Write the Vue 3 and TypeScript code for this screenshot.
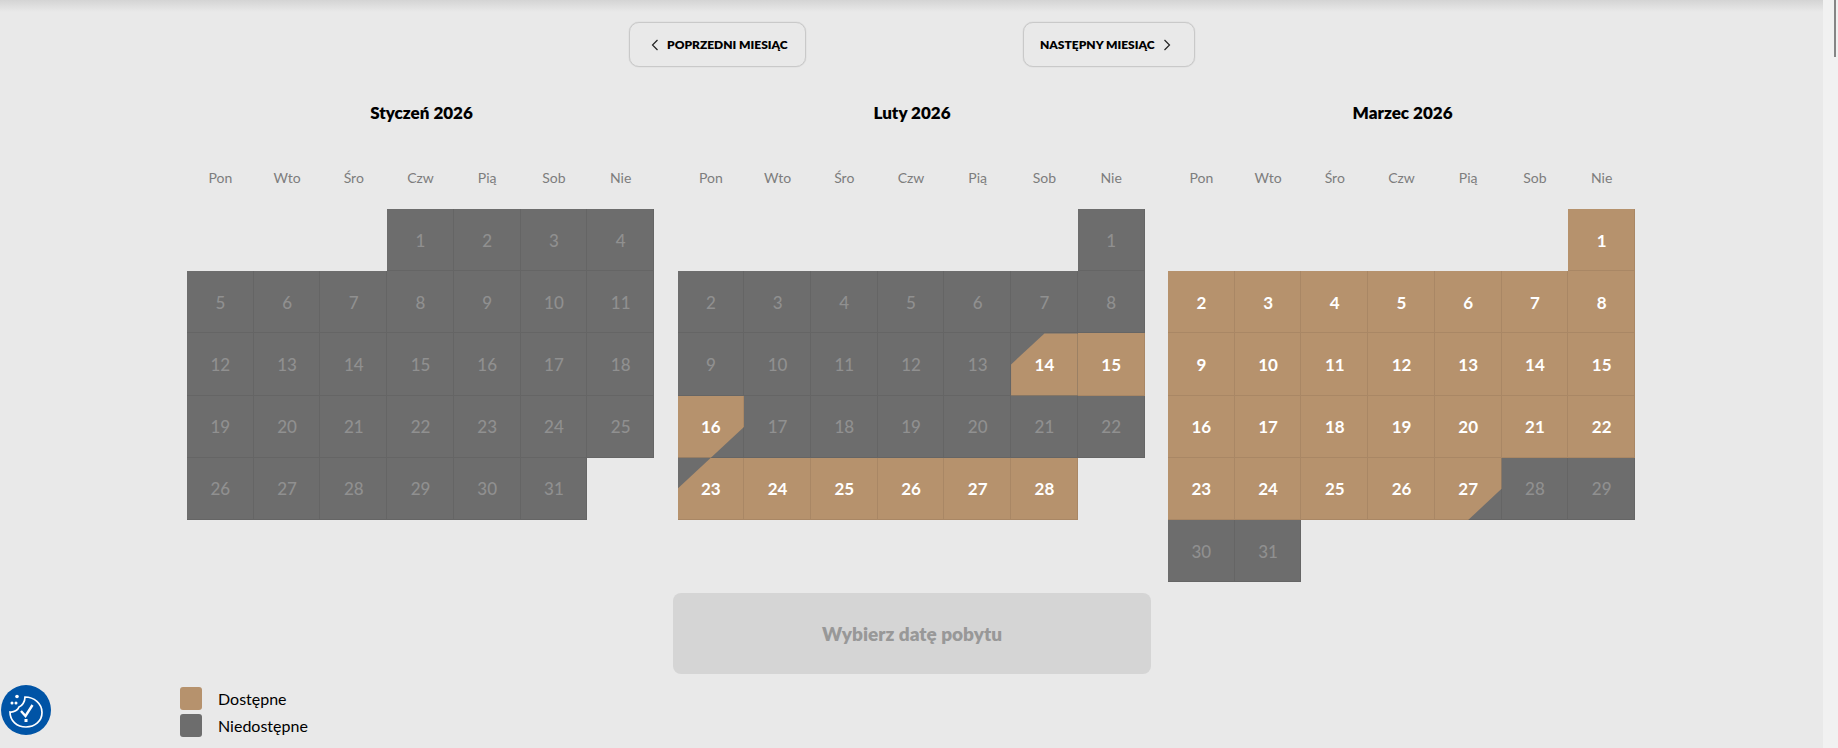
<script setup lang="ts">
type CellState = 'off' | 'on' | 'start' | 'end'

interface Month {
  title: string
  offset: number
  days: number
  state: (day: number) => CellState
}

const weekdays = ['Pon', 'Wto', 'Śro', 'Czw', 'Pią', 'Sob', 'Nie']

const months: Month[] = [
  { title: 'Styczeń 2026', offset: 3, days: 31, state: () => 'off' },
  {
    title: 'Luty 2026',
    offset: 6,
    days: 28,
    state: (day) => {
      if (day === 14 || day === 23) return 'start'
      if (day === 16) return 'end'
      return day === 15 || day > 23 ? 'on' : 'off'
    },
  },
  {
    title: 'Marzec 2026',
    offset: 6,
    days: 31,
    state: (day) => {
      if (day === 27) return 'end'
      return day < 27 ? 'on' : 'off'
    },
  },
]

function daysOf(month: Month) {
  return Array.from({ length: month.days }, (_, i) => i + 1)
}
</script>

<template>
  <div class="page">
    <main class="content">
      <nav class="month-nav">
        <button class="nav-btn prev">
          <svg width="8" height="12" viewBox="0 0 8 12"><path d="M6.500 1 1.500 6l5 5" /></svg>
          Poprzedni miesiąc
        </button>
        <button class="nav-btn next">
          Następny miesiąc
          <svg width="8" height="12" viewBox="0 0 8 12"><path d="M1.500 1l5 5-5 5" /></svg>
        </button>
      </nav>

      <section class="months">
        <div v-for="month in months" :key="month.title" class="month">
          <h2 class="month-title">{{ month.title }}</h2>
          <div class="weekdays">
            <span v-for="day in weekdays" :key="day">{{ day }}</span>
          </div>
          <div class="days">
            <span v-for="n in month.offset" :key="'empty' + n" class="blank"></span>
            <span v-for="day in daysOf(month)" :key="day" class="cell" :class="month.state(day)">
              <b>{{ day }}</b>
            </span>
          </div>
        </div>
      </section>

      <button class="submit" disabled>Wybierz datę pobytu</button>

      <ul class="legend">
        <li><i class="swatch tan"></i>Dostępne</li>
        <li><i class="swatch gray"></i>Niedostępne</li>
      </ul>
    </main>

    <aside class="scrollbar"><div class="thumb"></div></aside>

    <div class="cookie">
      <svg width="50" height="50" viewBox="0 0 50 50">
        <circle cx="25" cy="25" r="25" fill="#0054a6" />
        <path class="cookie-line" d="M24 12C33 12 41 18.500 41 27.500C41 36 34 42 25 42C16 42 9 36 9 27C13 27.500 17 25 18 22C21 21 24 17 24 12Z" />
        <path class="cookie-line check" d="M20 26l4.500 5 7-11" />
        <rect x="23.500" y="34" width="3" height="3" fill="#fff" />
        <circle cx="16" cy="11.500" r="1.800" fill="#fff" />
        <circle cx="11" cy="18" r="1.500" fill="#fff" />
        <circle cx="15" cy="18" r="1.500" fill="#fff" />
      </svg>
    </div>
  </div>
</template>

<style scoped>
.page {
  position: relative;
  display: flex;
  height: 748px;
  overflow: hidden;
  font-family: Lato, "Noto Sans", sans-serif;
  background: #e9e9e9;
  color: #000;
}
.page::before {
  content: '';
  position: absolute;
  left: 0;
  right: 0;
  top: 0;
  height: 12px;
  background: linear-gradient(#d4d4d4, #e9e9e9);
}
.content {
  flex: 1;
  min-width: 0;
  position: relative;
}
.scrollbar {
  position: relative;
  width: 15px;
  background: #f1f1f1;
}
.thumb {
  width: 2px;
  height: 57px;
  margin-left: 11px;
  background: #858585;
}
.month-nav {
  display: flex;
  gap: 217px;
  padding: 22px 0 0 629px;
}
.nav-btn {
  display: flex;
  align-items: center;
  gap: 8px;
  height: 45px;
  border: 1px solid #c9c9c9;
  border-radius: 10px;
  background: transparent;
  box-shadow: 0 0 1px rgba(0, 0, 0, 0.25);
  color: #000;
  font: 800 12px Lato, sans-serif;
  text-transform: uppercase;
}
.nav-btn.prev {
  width: 177px;
  padding: 0 0 0 21px;
}
.nav-btn.next {
  width: 172px;
  padding: 0 0 0 16px;
}
.nav-btn svg path {
  fill: none;
  stroke: #222;
  stroke-width: 1.2;
}
.months {
  display: flex;
  gap: 23.5px;
  padding: 35px 0 0 187px;
}
.month {
  width: 467px;
}
.month-title {
  margin: 0;
  height: 22px;
  padding-left: 2px;
  font-size: 17px;
  font-weight: 800;
  line-height: 22px;
  text-align: center;
}
.weekdays {
  display: grid;
  grid-template-columns: repeat(7, 1fr);
  padding-top: 44px;
  height: 85px;
  box-sizing: border-box;
  font-size: 14px;
  color: #7d7d7d;
  text-align: center;
  line-height: 20px;
}
.days {
  display: grid;
  grid-template-columns: repeat(7, 1fr);
  grid-auto-rows: 62.2px;
}
.cell {
  position: relative;
  display: flex;
  align-items: center;
  justify-content: center;
  background: #6d6d6d;
  font-size: 17px;
  color: #909090;
}
.cell b {
  position: relative;
  font-weight: 500;
  z-index: 1;
}
.cell::after {
  content: '';
  position: absolute;
  inset: 0;
  box-shadow: inset -1px -1px 0 rgba(0, 0, 0, 0.07);
}
.cell.on,
.cell.start,
.cell.end {
  color: #fff;
}
.cell.on b,
.cell.start b,
.cell.end b {
  font-weight: 700;
}
.cell.on,
.cell.start::before,
.cell.end::before {
  background: #b6926d;
}
.cell.start::before,
.cell.end::before {
  content: '';
  position: absolute;
  inset: 0;
}
.cell.start::before {
  clip-path: polygon(50% 0, 100% 0, 100% 100%, 0 100%, 0 50%);
}
.cell.end::before {
  clip-path: polygon(0 0, 100% 0, 100% 50%, 50% 100%, 0 100%);
}
.submit {
  display: block;
  width: 478px;
  height: 81px;
  margin: 11px 0 0 673px;
  border: 0;
  border-radius: 8px;
  background: #d5d5d5;
  color: #989898;
  font: 800 19px Lato, sans-serif;
}
.legend {
  list-style: none;
  margin: 11px 0 0 180px;
  padding: 0;
  font-size: 16px;
}
.legend li {
  display: flex;
  align-items: center;
  height: 27px;
  gap: 16px;
}
.swatch {
  width: 22px;
  height: 23px;
  border-radius: 3px;
}
.swatch.tan {
  background: #b6926d;
}
.swatch.gray {
  background: #6d6d6d;
}
.cookie {
  position: absolute;
  left: 1px;
  top: 685px;
  width: 50px;
  height: 50px;
}
.cookie-line {
  fill: none;
  stroke: #fff;
  stroke-width: 1.700;
}
.check {
  stroke-width: 2.400;
}
</style>
